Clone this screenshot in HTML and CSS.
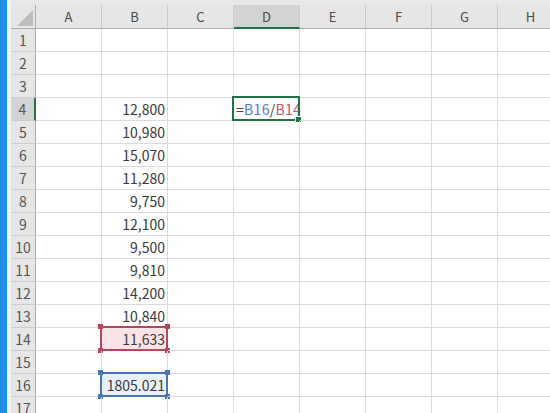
FILE: index.html
```html
<!DOCTYPE html>
<html lang="ja">
<head>
<meta charset="utf-8">
<title>Sheet</title>
<link rel="stylesheet" href="styles.css">
</head>
<body>
<div class="app">
  <div class="strip-blue"></div>
  <div class="strip-light"></div>
  <div class="sheet">
    <div class="topband"></div>
    <div class="grid">
      <div class="corner"><svg class="tri" width="16" height="16" viewBox="0 0 16 16"><polygon points="0,16 16,16 16,0" fill="#bdbdbd"/></svg></div>
      <div class="ch">A</div><div class="ch">B</div><div class="ch">C</div><div class="ch sel">D</div><div class="ch">E</div><div class="ch">F</div><div class="ch">G</div><div class="ch">H</div>

      <div class="rh">1</div><div class="c"></div><div class="c"></div><div class="c"></div><div class="c"></div><div class="c"></div><div class="c"></div><div class="c"></div><div class="c"></div>
      <div class="rh">2</div><div class="c"></div><div class="c"></div><div class="c"></div><div class="c"></div><div class="c"></div><div class="c"></div><div class="c"></div><div class="c"></div>
      <div class="rh">3</div><div class="c"></div><div class="c"></div><div class="c"></div><div class="c"></div><div class="c"></div><div class="c"></div><div class="c"></div><div class="c"></div>
      <div class="rh sel">4</div><div class="c"></div><div class="c num">12,800</div><div class="c"></div><div class="c edit"><span class="op">=</span><span class="ref-blue">B16</span><span class="op">/</span><span class="ref-red">B14</span><span class="caret"></span><div class="sel-box"><div class="fill-handle"></div></div></div><div class="c"></div><div class="c"></div><div class="c"></div><div class="c"></div>
      <div class="rh">5</div><div class="c"></div><div class="c num">10,980</div><div class="c"></div><div class="c"></div><div class="c"></div><div class="c"></div><div class="c"></div><div class="c"></div>
      <div class="rh">6</div><div class="c"></div><div class="c num">15,070</div><div class="c"></div><div class="c"></div><div class="c"></div><div class="c"></div><div class="c"></div><div class="c"></div>
      <div class="rh">7</div><div class="c"></div><div class="c num">11,280</div><div class="c"></div><div class="c"></div><div class="c"></div><div class="c"></div><div class="c"></div><div class="c"></div>
      <div class="rh">8</div><div class="c"></div><div class="c num">9,750</div><div class="c"></div><div class="c"></div><div class="c"></div><div class="c"></div><div class="c"></div><div class="c"></div>
      <div class="rh">9</div><div class="c"></div><div class="c num">12,100</div><div class="c"></div><div class="c"></div><div class="c"></div><div class="c"></div><div class="c"></div><div class="c"></div>
      <div class="rh">10</div><div class="c"></div><div class="c num">9,500</div><div class="c"></div><div class="c"></div><div class="c"></div><div class="c"></div><div class="c"></div><div class="c"></div>
      <div class="rh">11</div><div class="c"></div><div class="c num">9,810</div><div class="c"></div><div class="c"></div><div class="c"></div><div class="c"></div><div class="c"></div><div class="c"></div>
      <div class="rh">12</div><div class="c"></div><div class="c num">14,200</div><div class="c"></div><div class="c"></div><div class="c"></div><div class="c"></div><div class="c"></div><div class="c"></div>
      <div class="rh">13</div><div class="c"></div><div class="c num">10,840</div><div class="c"></div><div class="c"></div><div class="c"></div><div class="c"></div><div class="c"></div><div class="c"></div>
      <div class="rh">14</div><div class="c"></div><div class="c num hl-red">11,633<div class="ref-box red"><i class="h tl"></i><i class="h tr"></i><i class="h bl"></i><i class="h br"></i></div></div><div class="c"></div><div class="c"></div><div class="c"></div><div class="c"></div><div class="c"></div><div class="c"></div>
      <div class="rh">15</div><div class="c"></div><div class="c"></div><div class="c"></div><div class="c"></div><div class="c"></div><div class="c"></div><div class="c"></div><div class="c"></div>
      <div class="rh">16</div><div class="c"></div><div class="c num hl-blue">1805.021<div class="ref-box blue"><i class="h tl"></i><i class="h tr"></i><i class="h bl"></i><i class="h br"></i></div></div><div class="c"></div><div class="c"></div><div class="c"></div><div class="c"></div><div class="c"></div><div class="c"></div>
      <div class="rh">17</div><div class="c"></div><div class="c"></div><div class="c"></div><div class="c"></div><div class="c"></div><div class="c"></div><div class="c"></div><div class="c"></div>
    </div>
  </div>
</div>
</body>
</html>
```
FILE: styles.css
```css
html, body {
  margin: 0;
  height: 100%;
  overflow: hidden;
  background: #fff;
}
.app {
  display: flex;
  height: 413px;
  font-family: "Noto Sans CJK JP", "Noto Sans", sans-serif;
  overflow: hidden;
}
.strip-blue {
  flex: none;
  width: 7px;
  background: #1b8fe3;
}
.strip-light {
  flex: none;
  width: 4px;
  background: #f3f3f3;
}
.sheet {
  flex: 1;
  display: flex;
  flex-direction: column;
  overflow: hidden;
}
.topband {
  flex: none;
  height: 5px;
  background: #e8e8e8;
}
.grid {
  display: grid;
  grid-template-columns: 25px repeat(8, 66px);
  grid-template-rows: 24px;
  grid-auto-rows: 23px;
}
.grid > div {
  box-sizing: border-box;
}
.corner {
  background: #e6e6e6;
  border-right: 1px solid #ababab;
  border-bottom: 1px solid #ababab;
  display: flex;
  align-items: flex-start;
  justify-content: flex-start;
}
.tri {
  margin: 5px 0 0 6px;
}
.ch {
  background: #e6e6e6;
  border-right: 1px solid #cbcbcb;
  border-bottom: 1px solid #ababab;
  color: #4a4a4a;
  font-size: 13px;
  display: flex;
  align-items: center;
  justify-content: center;
}
.ch.sel {
  background: #d3d3d3;
  border-bottom: 2px solid #217346;
}
.rh {
  background: #e6e6e6;
  border-right: 1px solid #ababab;
  border-bottom: 1px solid #cdcdcd;
  color: #555;
  font-size: 14px;
  display: flex;
  align-items: center;
  justify-content: center;
}
.rh.sel {
  background: #d3d3d3;
  border-right: 2px solid #217346;
}
.c {
  position: relative;
  border-right: 1px solid #dadada;
  border-bottom: 1px solid #dadada;
  color: #3a3a3a;
  font-size: 14px;
  display: flex;
  align-items: center;
  padding: 0 2px 0 3px;
  white-space: nowrap;
}
.c.num {
  justify-content: flex-end;
}
.c.edit {
  padding-left: 2px;
  letter-spacing: 0.3px;
}
.op {
  color: #444;
}
.ref-blue {
  color: #5a7cc0;
}
.ref-red {
  color: #c0566e;
}
.caret {
  display: inline-block;
  width: 1px;
  height: 15px;
  background: #333;
  margin-left: 1px;
}
.sel-box {
  position: absolute;
  left: -2px;
  top: -2px;
  right: -1px;
  bottom: -1px;
  border: 2px solid #217346;
}
.fill-handle {
  position: absolute;
  right: -4px;
  bottom: -4px;
  width: 5px;
  height: 5px;
  background: #217346;
  border: 1px solid #fff;
}
.hl-red {
  background: #fbe4e7;
}
.hl-blue {
  background: #e9f0fa;
}
.ref-box {
  position: absolute;
  left: -2px;
  top: -2px;
  right: -1px;
  bottom: -1px;
  border: 2px solid currentColor;
}
.ref-box.red {
  color: #b5475d;
}
.ref-box.blue {
  color: #4a76b6;
}
.h {
  position: absolute;
  width: 5px;
  height: 5px;
  background: currentColor;
}
.h.tl { left: -4px; top: -4px; }
.h.tr { right: -4px; top: -4px; }
.h.bl { left: -4px; bottom: -4px; }
.h.br { right: -4px; bottom: -4px; }
```
